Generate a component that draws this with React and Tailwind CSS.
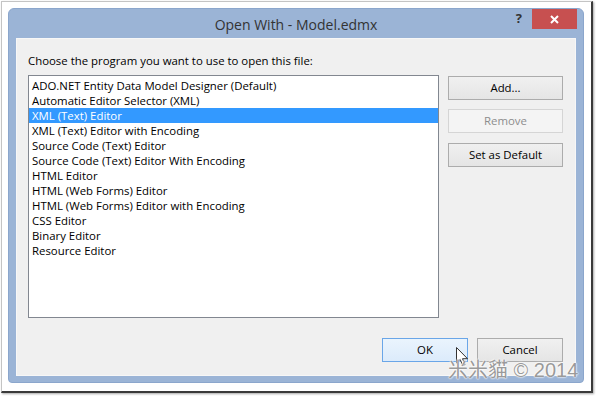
import React from 'react';

const items = [
  'ADO.NET Entity Data Model Designer (Default)',
  'Automatic Editor Selector (XML)',
  'XML (Text) Editor',
  'XML (Text) Editor with Encoding',
  'Source Code (Text) Editor',
  'Source Code (Text) Editor With Encoding',
  'HTML Editor',
  'HTML (Web Forms) Editor',
  'HTML (Web Forms) Editor with Encoding',
  'CSS Editor',
  'Binary Editor',
  'Resource Editor',
];

function Button({ children, variant = 'normal', className = '' }) {
  const look =
    variant === 'primary'
      ? 'border-[#6aa6e8] bg-linear-to-b from-[#eaf4fd] to-[#dcebfb] text-black'
      : variant === 'disabled'
      ? 'border-[#d5d5d5] bg-[#f4f4f4] text-[#8d8d8d]'
      : 'border-[#acacac] bg-linear-to-b from-[#f0f0f0] to-[#e5e5e5] text-black';
  return (
    <div className={`flex h-[24px] items-center justify-center border text-[11.4px] ${look} ${className}`}>
      {children}
    </div>
  );
}

export default function App() {
  const selected = 2;

  return (
    <div className="relative h-[397px] w-[596px] overflow-hidden bg-white pl-px pt-px font-['Open_Sans',sans-serif]">
      <div className="h-[392px] w-[592px] border-b-2 border-l border-r-2 border-t border-b-[#3a3a3a] border-l-[#c4c4c4] border-r-[#3a3a3a] border-t-[#c4c4c4] p-[6px] shadow-[1px_1px_2px_rgba(0,0,0,0.35)]">
        {/* Window */}
        <div className="flex h-[375px] w-[576px] flex-col rounded-[6px] rounded-b-[4px] border border-[#8ba6cc] bg-[#9bb4d6]">
          {/* Title bar */}
          <div className="relative flex h-[29px] items-center justify-center pt-[2px]">
            <span className="text-[14px] text-[#333] leading-none">Open With - Model.edmx</span>
            <div className="absolute right-[61px] top-0 flex h-[20px] items-center text-[13px] font-bold text-[#333]">?</div>
            <div className="absolute right-[6px] top-0 flex h-[20px] w-[45px] items-center justify-center bg-[#c75050]">
              <svg width="9" height="9" viewBox="0 0 9 9">
                <path d="M1 1 L8 8 M8 1 L1 8" stroke="#fff" strokeWidth="2" />
              </svg>
            </div>
          </div>

          {/* Client area */}
          <div className="mx-[7px] flex h-[338px] flex-col border border-[#f7f7f7] bg-[#f0f0f0] pl-[11px] pr-[12px] pt-[14px]">
            <div className="h-[15px] text-[11.4px] leading-[15px] text-black">
              Choose the program you want to use to open this file:
            </div>

            <div className="mt-[7px] flex gap-[9px]">
              <div className="h-[243px] w-[411px] border border-[#828790] bg-white pt-[2px]">
                {items.map((item, i) => (
                  <div
                    key={item}
                    className={`h-[15px] pl-[3px] text-[11.4px] leading-[15px] ${
                      i === selected ? 'bg-[#3399ff] text-white' : 'text-black'
                    }`}
                  >
                    {item}
                  </div>
                ))}
              </div>

              <div className="flex w-[115px] flex-col gap-[9px] pt-px">
                <Button>Add...</Button>
                <Button variant="disabled">Remove</Button>
                <Button className="mt-px">Set as Default</Button>
              </div>
            </div>

            <div className="mt-[20px] flex justify-end gap-[9px]">
              <Button variant="primary" className="w-[86px]">OK</Button>
              <Button className="w-[86px]">Cancel</Button>
            </div>
          </div>
        </div>
      </div>

      {/* Mouse cursor */}
      <svg className="absolute left-[456px] top-[347px]" width="13" height="20" viewBox="0 0 13 20">
        <path
          d="M0.5 0.5 L0.5 16 L4.2 12.5 L6.8 18.5 L9 17.5 L6.5 11.7 L11.5 11.7 Z"
          fill="#fff"
          stroke="#333"
          strokeWidth="1"
          strokeLinejoin="round"
        />
      </svg>

      {/* Watermark */}
      <div className="absolute left-[448px] top-[360px] whitespace-nowrap font-['Liberation_Sans','Noto_Sans_CJK_TC',sans-serif] text-[20px] leading-[20px] text-[#9a9a9a] [text-shadow:0_0_2px_#fff,0_0_2px_#fff,0_0_1px_#fff]">
        米米貓 © 2014
      </div>
    </div>
  );
}
